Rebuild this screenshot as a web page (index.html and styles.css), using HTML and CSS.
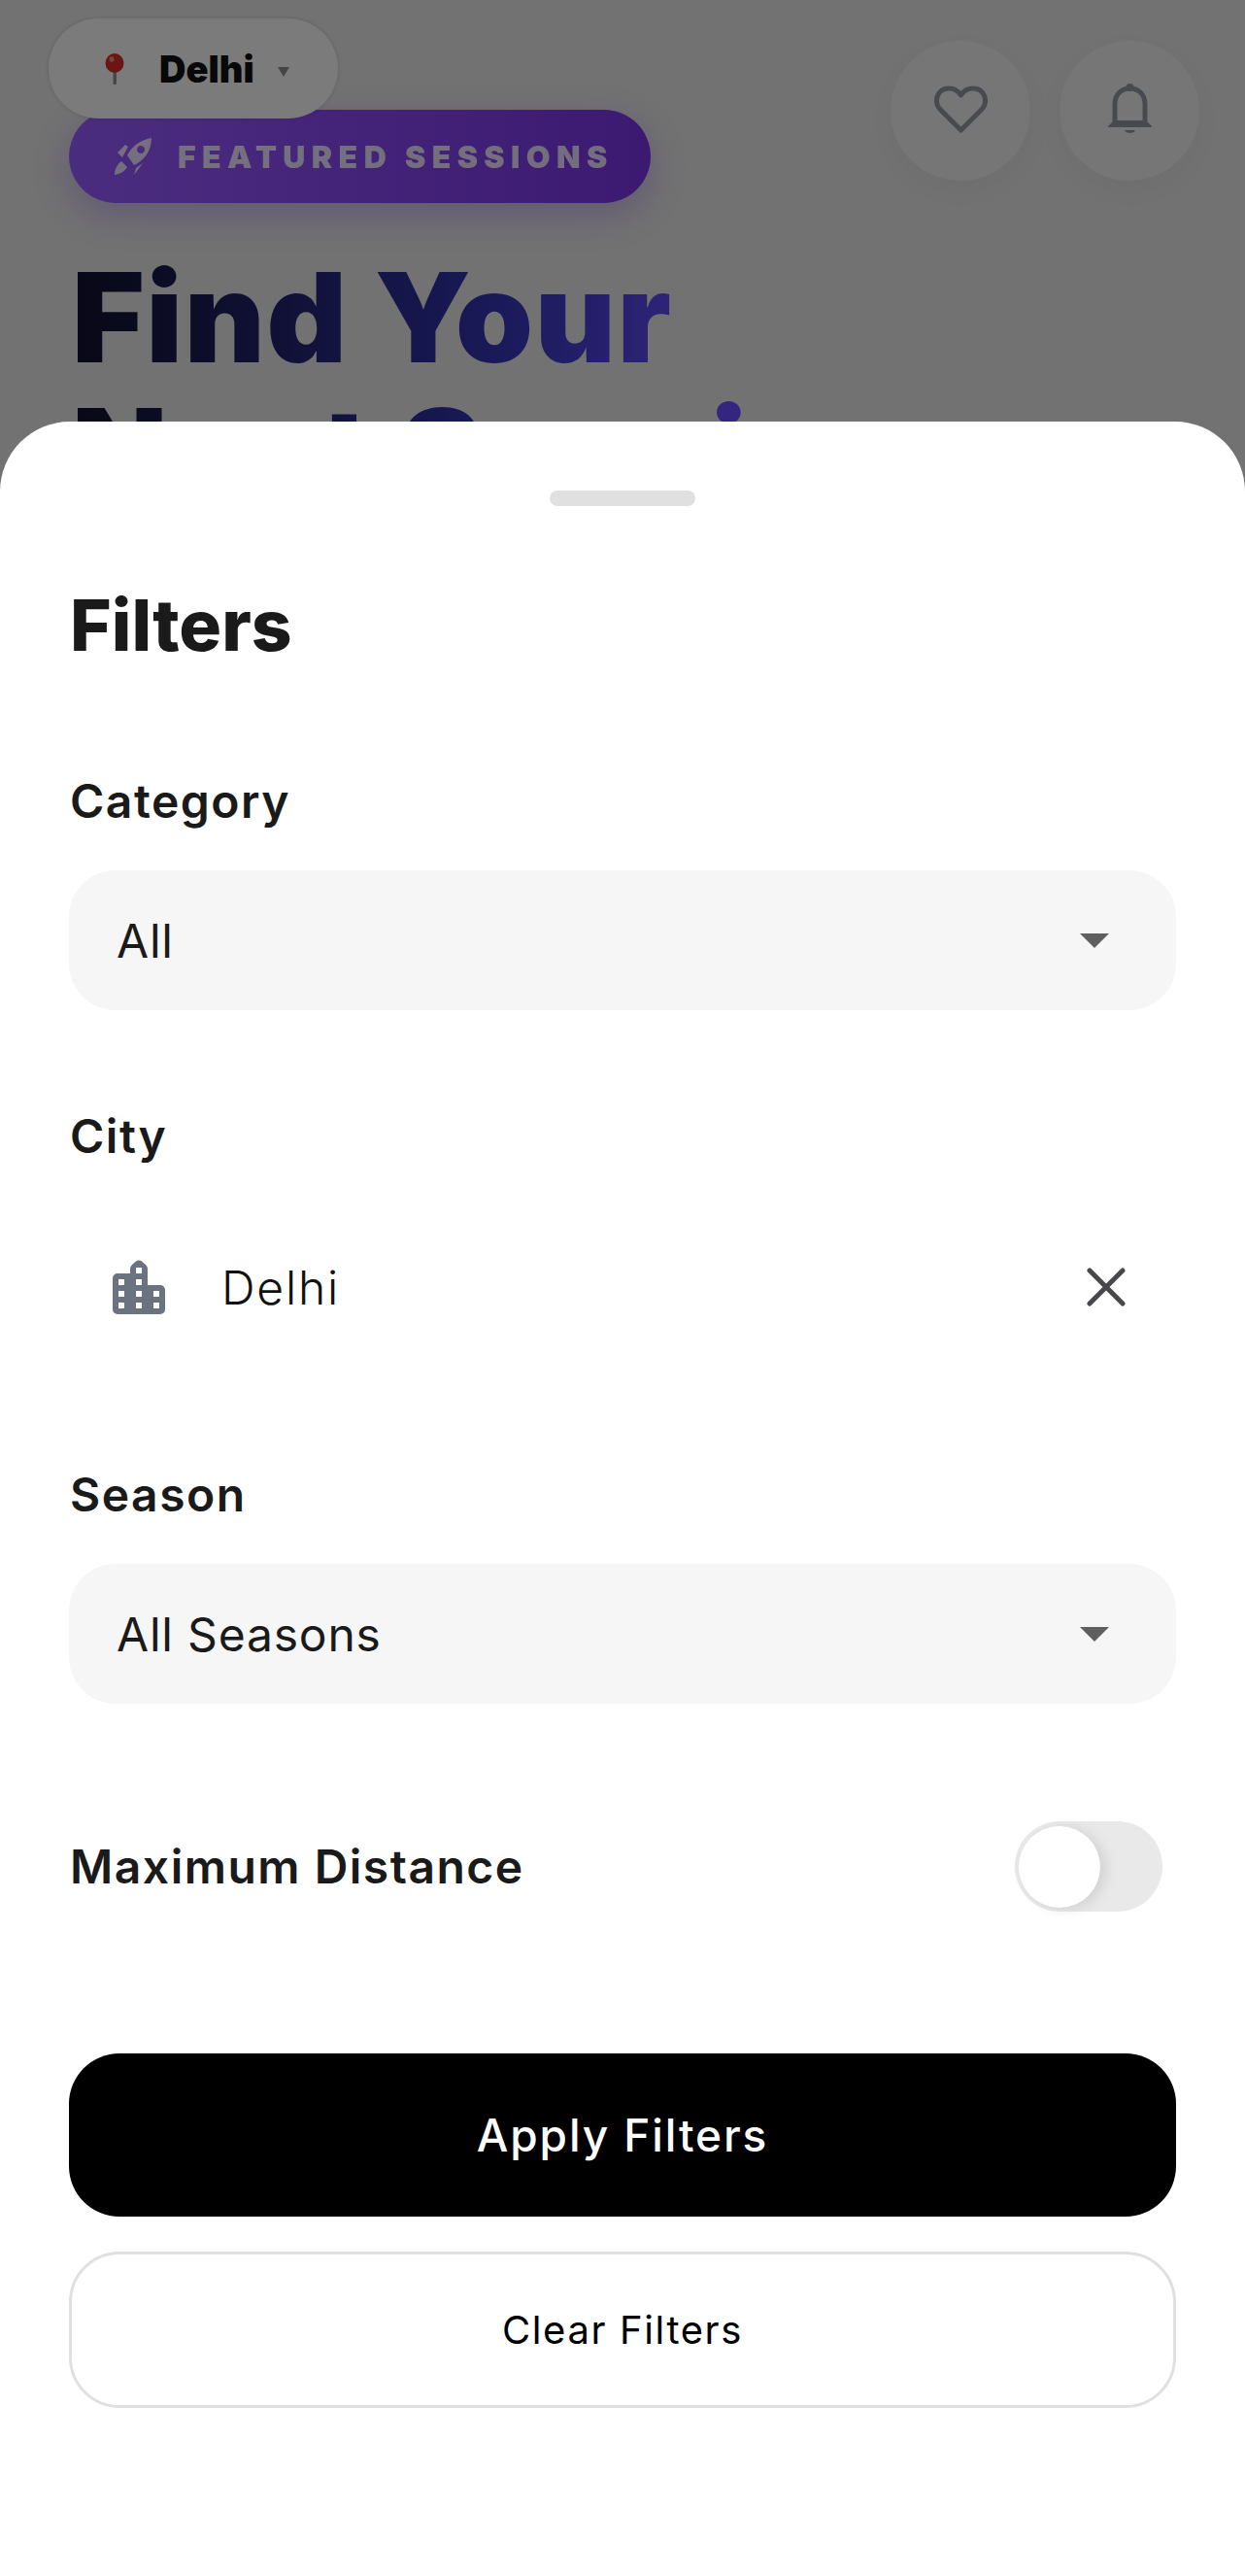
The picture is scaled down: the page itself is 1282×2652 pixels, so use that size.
FILE: index.html
```html
<!DOCTYPE html>
<html lang="en">
<head>
    <meta charset="UTF-8">
    <meta name="viewport" content="width=device-width, initial-scale=1.0">
    <title>Filters</title>
    <link rel="stylesheet" href="styles.css">
</head>
<body>
    <!-- Page behind the sheet -->
    <div class="page">
        <div class="top-bar">
            <button class="city-pill">
                <svg class="pin" viewBox="0 0 20 32">
                    <rect x="8.5" y="14" width="3.4" height="18" rx="1" fill="#8d8d8d"/>
                    <ellipse cx="10" cy="10" rx="9.5" ry="10" fill="#d92b2b"/>
                    <ellipse cx="7" cy="6" rx="2.5" ry="2.8" fill="#f08a80"/>
                </svg>
                <span class="city-name">Delhi</span>
                <span class="city-caret"></span>
            </button>
            <div class="top-actions">
                <button class="round-btn">
                    <svg class="heart" viewBox="0 0 55 49">
                        <path d="M27.5 46 L6 24.5 C-1 17 3 3 15 3 C20.500 3 25 6 27.500 10 C30 6 34.500 3 40 3 C52 3 56 17 49 24.500 Z" fill="none" stroke="#8f979f" stroke-width="5" stroke-linejoin="round"/>
                    </svg>
                </button>
                <button class="round-btn">
                    <svg class="bell" viewBox="0 0 45 53">
                        <circle cx="22.500" cy="4" r="4" fill="#8f979f"/>
                        <path d="M7 41 V21 C7 11 14 5 22.500 5 C31 5 38 11 38 21 V41" fill="none" stroke="#8f979f" stroke-width="5"/>
                        <path d="M0 44 L6 38 H39 L45 44 V45 H0 Z" fill="#8f979f"/>
                        <path d="M17 48 H28 C27 52 18 52 17 48 Z" fill="#8f979f"/>
                    </svg>
                </button>
            </div>
        </div>

        <div class="badge">
            <svg class="rocket" viewBox="0 0 39 38">
                <path d="M38 0 C27 2 18 8 13 18 L20 28 C31 23 38 13 38 0 Z M27 8 a4 4 0 1 0 0.100 0 Z" fill="#fff" fill-rule="evenodd"/>
                <path d="M11 7 L3 15 L8 20 L14 9 Z M22 31 L20 38 L29 26 Z M7 24 C3 27 0 32 0 38 C6 37 11 34 13 30 Z" fill="#fff"/>
            </svg>
            <span>FEATURED SESSIONS</span>
        </div>

        <h1 class="hero-title">Find Your<br>Next Session</h1>
    </div>

    <div class="scrim"></div>

    <!-- Filter sheet -->
    <div class="sheet">
        <div class="handle"></div>
        <h2 class="sheet-title">Filters</h2>

        <div class="field">
            <label class="field-label">Category</label>
            <div class="select">
                <span>All</span>
                <span class="select-caret"></span>
            </div>
        </div>

        <div class="field field-city">
            <label class="field-label">City</label>
            <div class="city-row">
                <svg class="building" viewBox="0 0 54 56">
                    <path d="M24 1.500 Q27 -0.500 30 1.500 L34 5 Q36 7 36 9 V26 H49 A5 5 0 0 1 54 31 V51 A5 5 0 0 1 49 56 H5 A5 5 0 0 1 0 51 V19 A5 5 0 0 1 5 14 H18 V9 Q18 7 20 5 Z" fill="#6b7280"/>
                    <g fill="#fff">
                        <rect x="24" y="8" width="6" height="6"/>
                        <rect x="6" y="20" width="6" height="6"/>
                        <rect x="24" y="20" width="6" height="6"/>
                        <rect x="6" y="32" width="6" height="6"/>
                        <rect x="24" y="32" width="6" height="6"/>
                        <rect x="42" y="32" width="6" height="6"/>
                        <rect x="6" y="44" width="6" height="6"/>
                        <rect x="24" y="44" width="6" height="6"/>
                        <rect x="42" y="44" width="6" height="6"/>
                    </g>
                </svg>
                <span class="city-value">Delhi</span>
                <svg class="close" viewBox="0 0 40 40">
                    <path d="M3 3 L37 37 M37 3 L3 37" stroke="#48484c" stroke-width="5" stroke-linecap="round"/>
                </svg>
            </div>
        </div>

        <div class="field">
            <label class="field-label">Season</label>
            <div class="select">
                <span>All Seasons</span>
                <span class="select-caret"></span>
            </div>
        </div>

        <div class="distance-row">
            <span class="field-label">Maximum Distance</span>
            <div class="toggle"><div class="toggle-thumb"></div></div>
        </div>

        <button class="btn-apply">Apply Filters</button>
        <button class="btn-clear">Clear Filters</button>
    </div>
</body>
</html>
```

FILE: styles.css
```css
/* Basic Styles */
* {
    box-sizing: border-box;
}

body {
    margin: 0;
    width: 1282px;
    height: 2652px;
    overflow: hidden;
    position: relative;
    background: #e4e4e4;
    font-family: Inter, "Liberation Sans", sans-serif;
}

button {
    border: none;
    padding: 0;
    font-family: inherit;
    cursor: pointer;
}

/* Page behind the sheet */
.page {
    padding: 19px 47px 0 50px;
}

.top-bar {
    display: flex;
    justify-content: space-between;
    height: 94px;
}

.city-pill {
    display: flex;
    align-items: center;
    width: 298px;
    height: 103px;
    padding: 0 0 0 58px;
    border-radius: 52px;
    background: #f6f6f6;
    box-shadow: 0 0 4px rgba(0, 0, 0, 0.15);
    position: relative;
    z-index: 1;
}

.pin {
    width: 20px;
    height: 32px;
}

.city-name {
    margin-left: 36px;
    font-size: 38px;
    font-weight: 900;
    color: #111;
}

.city-caret {
    margin: 6px 0 0 24px;
    border-left: 6px solid transparent;
    border-right: 6px solid transparent;
    border-top: 10px solid #8a8a8a;
}

.top-actions {
    display: flex;
    gap: 30px;
    padding-top: 23px;
}

.round-btn {
    display: flex;
    align-items: center;
    justify-content: center;
    width: 144px;
    height: 144px;
    border-radius: 50%;
    background: #ececec;
    box-shadow: 0 10px 30px rgba(0, 0, 0, 0.03);
}

.heart {
    width: 55px;
    height: 49px;
    margin-bottom: 4px;
}

.bell {
    width: 45px;
    height: 53px;
    margin-bottom: 4px;
}

.badge {
    display: flex;
    align-items: center;
    width: 599px;
    height: 96px;
    margin-left: 21px;
    padding-left: 47px;
    border-radius: 48px;
    background: linear-gradient(90deg, #965aff, #7834e4);
    box-shadow: 0 12px 36px rgba(124, 58, 237, 0.3);
}

.rocket {
    width: 39px;
    height: 38px;
    opacity: 0.8;
}

.badge span {
    margin-left: 26px;
    font-size: 32px;
    font-weight: 900;
    letter-spacing: 6.4px;
    color: #fff;
    opacity: 0.82;
}

.hero-title {
    margin: 48px 0 0 24px;
    font-size: 128px;
    font-weight: 900;
    line-height: 140px;
    letter-spacing: 1.6px;
    background: linear-gradient(90deg, #10102c 0%, #3434b4 40%, #684dff 60%);
    -webkit-background-clip: text;
    background-clip: text;
    color: transparent;
    width: 1100px;
}

.scrim {
    position: absolute;
    inset: 0;
    background: rgba(0, 0, 0, 0.5);
    z-index: 2;
}

/* Filter sheet */
.sheet {
    position: absolute;
    left: 0;
    right: 0;
    top: 434px;
    bottom: 0;
    z-index: 3;
    padding: 70px 71px 0;
    background: #fff;
    border-radius: 72px 72px 0 0;
}

.handle {
    width: 150px;
    height: 16px;
    margin: 1px auto 0;
    border-radius: 8px;
    background: #e0e0e0;
}

.sheet-title {
    margin: 81px 0 109px 1px;
    font-size: 73px;
    font-weight: 800;
    line-height: 84px;
    color: #1a1a1a;
}

.field {
    margin-bottom: 98px;
}

.field-label {
    display: block;
    margin-left: 1px;
    font-size: 48px;
    font-weight: 600;
    line-height: 60px;
    letter-spacing: 1.5px;
    color: #1a1a1a;
}

.field-city .field-label {
    padding-top: 2px;
}

.select {
    display: flex;
    align-items: center;
    justify-content: space-between;
    height: 144px;
    margin-top: 41px;
    padding: 0 69px 0 49px;
    border-radius: 48px;
    background: #f6f6f6;
    font-size: 48px;
    letter-spacing: 0.8px;
    color: #1a1a1a;
}

.select-caret {
    border-left: 15px solid transparent;
    border-right: 15px solid transparent;
    border-top: 15px solid #5f5f5f;
}

.city-row {
    display: flex;
    align-items: center;
    height: 172px;
    margin-top: 39px;
    padding: 0 52px 0 45px;
}

.building {
    width: 54px;
    height: 56px;
}

.city-value {
    flex: 1;
    margin-left: 58px;
    font-size: 48px;
    font-weight: 300;
    letter-spacing: 1.8px;
    color: #111;
}

.close {
    width: 40px;
    height: 40px;
}

.distance-row {
    display: flex;
    align-items: center;
    justify-content: space-between;
    height: 93px;
    margin-top: 121px;
    padding-right: 14px;
}

.toggle {
    width: 152px;
    height: 93px;
    padding: 5px 4px;
    border-radius: 47px;
    background: #e9e9e9;
}

.toggle-thumb {
    width: 84px;
    height: 84px;
    border-radius: 50%;
    background: #fff;
    box-shadow: 6px 2px 14px rgba(0, 0, 0, 0.1);
}

.btn-apply {
    display: block;
    width: 100%;
    height: 168px;
    margin-top: 146px;
    border-radius: 52px;
    background: #000;
    font-size: 46px;
    font-weight: 500;
    letter-spacing: 1.9px;
    color: #fff;
}

.btn-clear {
    display: block;
    width: 100%;
    height: 161px;
    margin-top: 36px;
    border: 3px solid #e0e0e0;
    border-radius: 52px;
    background: #fff;
    font-size: 40px;
    font-weight: 400;
    letter-spacing: 1.6px;
    color: #000;
}
```
